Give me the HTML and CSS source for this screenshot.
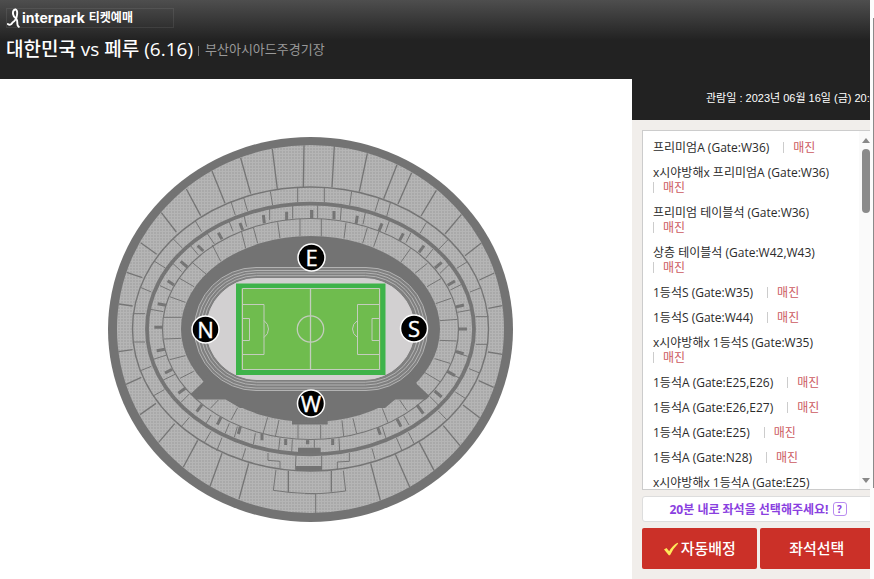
FILE: index.html
```
<!DOCTYPE html>
<html lang="ko">
<head>
<meta charset="utf-8">
<meta name="viewport" content="width=device-width, initial-scale=1">
<title>interpark 티켓예매</title>
<link rel="stylesheet" href="styles.css">
</head>
<body>
<div class="window">
  <div class="page">
    <header class="top">
      <a class="logo" href="#">
        <svg class="logo-mark" viewBox="0 0 14 20" aria-hidden="true"><path d="M.8 16Q3.500 18 5.500 14.500M5.500 14.500Q9.500 12 10 7M10 7Q10.800 2 8.300 1.300Q5.500 2 6 6Q6.500 9 9.300 10.800Q10.500 12.500 10.300 15.500Q10.300 18 11.800 18.800" fill="none" stroke="#fff" stroke-width="1.900" stroke-linecap="round"/></svg>
        <span class="brand">interpark</span>
        <span class="service">티켓예매</span>
      </a>
      <div class="event">
        <h1>대한민국 vs 페루 (6.16)</h1>
        <span class="bar"></span>
        <span class="venue">부산아시아드주경기장</span>
      </div>
    </header>
    <div class="content">
      <main class="map">
        <svg class="stadium" viewBox="100 130 420 400" role="img" aria-label="좌석 배치도">
          <defs>
            <pattern id="seats" width="3" height="3" patternUnits="userSpaceOnUse"><rect width="3" height="3" fill="#a9a9a9"/><path d="M0 .5H3M.5 0V3" stroke="#b5b5b5" stroke-width="1"/></pattern>
          </defs>
          <ellipse cx="310.500" cy="329.500" rx="202.500" ry="192.500" fill="#737373"/>
          <ellipse cx="310.500" cy="329" rx="193.500" ry="184" fill="url(#seats)"/>
          <ellipse cx="310.500" cy="329" rx="178" ry="142" fill="none" stroke="#757575" stroke-width="1.400"/>
          <ellipse cx="310.500" cy="329" rx="163.500" ry="125.300" fill="none" stroke="#757575" stroke-width="3.800"/>
          <ellipse cx="310.500" cy="329" rx="148" ry="110.500" fill="none" stroke="#757575" stroke-width="1.200"/>
          <ellipse cx="310.500" cy="329" rx="129.500" ry="93" fill="#737373"/>
          <path d="M203 382.300L190.500 394L196.500 399.500H226L240 408H385L395 399.500H426L429.500 396L417 384.300L410 370H210Z" fill="#737373"/>
          <path d="M292 415H327.700V424.500H292ZM298 447.700H320.700V453H298ZM296 466H322V471H296Z" fill="#737373"/>
          <g fill="none" stroke="#757575">
            <g transform="translate(100 130) scale(.33333)">
              <path stroke-width="4" d="M612 46L610 171M517 57L532 177M422 84L452 191M336 123L375 220M259 177L302 257M184 248L229 306M122 338L170 373M80 427L127 443M57 522L98 528"/>
              <path stroke-width="3" d="M593 173V217M511 184L518 226M431 203L443 244M393 215L406 256M286 273L305 305M219 326L247 354M162 393L196 414M121 472L154 486M98 551H135M578 227V266M509 235V270M432 257L440 290M387 273L399 304M320 308L343 342M270 345L295 375M215 397L245 425M180 467L212 482M152 538L190 545M600 266V318M533 277L540 325M460 292L473 340M424 303L437 355M337 345L362 394M275 396L318 432M237 444L282 470M209 500L256 517M192 562H245"/>
              <path stroke-width="9" d="M635 240V266M560 245V270M490 255L493 280M420 279L428 300M355 308L366 328M293 347L310 363M242 394L262 411M203 452L222 465M173 521L198 526M163 592H188"/>
            </g>
            <g transform="translate(305 130) scale(.33333)">
              <path stroke-width="4" d="M88 48L81 172M187 70L163 185M276 104L236 206M320 128L279 222M394 181L348 258M469 254L420 312M529 339L480 377M568 429L523 450M592 527L550 535"/>
              <path stroke-width="3" d="M58 173V217M140 184L134 226M222 206L210 245M256 219L245 260M364 278L345 310M430 328L402 357M486 396L455 415M528 473L495 486M550 560H512M38 226V266M109 232L106 270M181 248L174 283M254 270L241 307M318 308L303 338M385 356L362 385M434 402L405 430M472 462L436 480M495 540L457 547M49 266V319M123 278L117 325M187 293L173 340M222 304L206 350M317 355L288 396M367 400L330 430M408 446L366 470M438 505L392 521M458 568L405 572"/>
              <path stroke-width="9" d="M20 240V265M87 243V268M157 257L153 282M231 280L222 303M295 310L284 331M357 347L342 367M410 397L390 414M450 453L428 466M477 525L452 531M462 597H486"/>
            </g>
            <g transform="translate(100 325) scale(.33333)">
              <path stroke-width="4" d="M55 80L98 74M78 178L124 157M120 269L168 235M176 352L224 296M250 426L293 346M330 484L366 385M417 522L446 415M565 437V502"/>
              <path stroke-width="3" d="M100 51H135M119 138L154 124M161 212L193 194M245 304L268 277M313 353L333 319M350 378L366 338M427 402L437 370M504 384V406L540 409V430M588 392L586 435M528 434L520 496L567 502Q620 506 647 506M160 103L200 90M190 165L225 148M243 232L268 207M318 296L333 270M375 326L388 295M403 337L412 305M460 358L466 325M536 375L540 338M575 383L577 343M192 42L243 40M209 104L256 92M240 160L281 139M331 250L355 225M393 285L413 248M489 326L503 277M526 335L537 285M594 298V341"/>
              <path stroke-width="9" d="M170 77L195 73M195 144L216 133M235 205L256 190M290 260L306 239M352 299L363 277M415 327L421 305M486 346V325M557 342V360M623 346V357"/>
            </g>
            <g transform="translate(305 325) scale(.33333)">
              <path stroke-width="4" d="M592 88L549 81M566 187L521 167M524 278L474 240M465 362L415 302M387 436L343 352M314 486L271 388M226 526L197 415M79 437V500"/>
              <path stroke-width="3" d="M115 437L122 498Q60 506 32 506H0M32 506V565M548 58H513M524 144L492 131M481 220L451 201M425 284L400 258M327 355L310 322M291 377L274 338M210 403L201 370M133 384V409L97 411V433M50 393V435M488 94L450 82M465 160L430 143M374 214L400 240M296 272L312 300M232 305L243 340M102 340L104 378M28 344V368M404 46L455 48M389 101L435 115M360 143L405 170M284 225L306 257M232 250L249 293M144 280L155 326M111 286L116 333M47 300V341"/>
              <path stroke-width="9" d="M453 79L476 86M427 139L450 152M389 198L410 216M336 240L355 266M276 282L288 305M218 307L226 329M83 342V360M8 346V358"/>
            </g>
          </g>
          <g fill="#808080" stroke="#b3b3b3">
            <rect x="194.500" y="267.500" width="233" height="123" rx="61.500"/>
            <rect x="197.500" y="270.500" width="227" height="117.500" rx="58.500"/>
            <rect x="200.500" y="273" width="221" height="112" rx="56"/>
            <rect x="203.500" y="275.700" width="215" height="106.500" rx="53"/>
            <rect x="206.500" y="278.500" width="208" height="101" rx="50.500" fill="#d2d0d1" stroke="#d2d0d1"/>
          </g>
          <rect x="238.500" y="286" width="144.500" height="86.500" fill="#6fbc4e" stroke="#3eb34a" stroke-width="5"/>
          <g fill="none" stroke="#c3cdbd">
            <path d="M242.500 288.500H379.500V369.500H242.500ZM242.500 304.500H264V354.500H242.500M242.500 318.500H249.500V340.500H242.500M379.500 304.500H357.500V354.500H379.500M379.500 318.500H372V340.500H379.500M264 320.500Q268.500 324 268.500 329T264 337.500M357.500 320.500Q352.500 324 352.500 329T357.500 337.500"/>
            <path d="M310.500 288.500V369.500" stroke-width="1.300"/>
            <circle cx="310.500" cy="329" r="13.200" stroke-width="1.300"/>
          </g>
          <g class="markers">
            <circle cx="311.500" cy="257.500" r="13.500"/><text x="311.500" y="265.500">E</text>
            <circle cx="205.500" cy="329.500" r="13.500"/><text x="205.500" y="337.500">N</text>
            <circle cx="414" cy="328.500" r="13.500"/><text x="414" y="336.500">S</text>
            <circle cx="311" cy="403.500" r="13.500"/><text x="311" y="411.500">W</text>
          </g>
        </svg>
      </main>
      <aside class="side">
        <p class="date">관람일 : 2023년 06월 16일 (금) 20:00</p>
        <div class="side-body">
          <div class="list-box">
            <ul class="grades">
              <li><span>프리미엄A (Gate:W36)</span><em>매진</em></li>
              <li><span>x시야방해x 프리미엄A (Gate:W36)</span><em>매진</em></li>
              <li><span>프리미엄 테이블석 (Gate:W36)</span><em>매진</em></li>
              <li><span>상층 테이블석 (Gate:W42,W43)</span><em>매진</em></li>
              <li><span>1등석S (Gate:W35)</span><em>매진</em></li>
              <li><span>1등석S (Gate:W44)</span><em>매진</em></li>
              <li><span>x시야방해x 1등석S (Gate:W35)</span><em>매진</em></li>
              <li><span>1등석A (Gate:E25,E26)</span><em>매진</em></li>
              <li><span>1등석A (Gate:E26,E27)</span><em>매진</em></li>
              <li><span>1등석A (Gate:E25)</span><em>매진</em></li>
              <li><span>1등석A (Gate:N28)</span><em>매진</em></li>
              <li><span>x시야방해x 1등석A (Gate:E25)</span></li>
            </ul>
            <div class="scroll" aria-hidden="true">
              <i class="up"></i><i class="thumb"></i><i class="down"></i>
            </div>
          </div>
          <div class="notice">
            <span>20분 내로 좌석을 선택해주세요!</span>
            <button class="help" type="button">?</button>
          </div>
          <div class="actions">
            <button class="action" type="button"><svg class="check" viewBox="0 0 16 14" aria-hidden="true"><path d="M1 7.500L3.500 6L6.200 9.300Q9.500 3.500 14.500 .8L15.200 1.500Q10.500 6 7 13.200H5.800Z" fill="#ffe95a"/></svg>자동배정</button>
            <button class="action" type="button">좌석선택</button>
          </div>
        </div>
      </aside>
    </div>
  </div>
  <div class="page-scroll" aria-hidden="true"><i></i></div>
</div>
</body>
</html>
```
FILE: styles.css
```
* { box-sizing: border-box; }
body {
  margin: 0;
  background: #fff;
  color: #2b2b2b;
  font: 12px/15px "Open Sans", "Noto Sans CJK KR", sans-serif;
}
h1, p, ul { margin: 0; padding: 0; }
button { margin: 0; padding: 0; font: inherit; cursor: pointer; }

.window { display: flex; min-height: 100vh; }
.page { flex: 1; min-width: 0; display: flex; flex-direction: column; overflow: hidden; }

.top {
  height: 79px;
  padding: 8px 6px 0;
  background: linear-gradient(#4e4e4e, #222 40px);
  color: #fff;
}
.logo {
  display: flex;
  align-items: center;
  width: 168px;
  height: 20px;
  border: 1px solid rgba(255, 255, 255, .08);
  color: #fff;
  text-decoration: none;
  font-weight: 700;
  line-height: 18px;
}
.logo-mark { width: 14px; height: 20px; margin-right: 1px; flex: none; }
.brand { font-family: Inter, sans-serif; font-weight: 700; font-size: 14px; }
.service { margin-left: 4px; font-size: 12px; }
.event { display: flex; align-items: center; height: 42px; white-space: nowrap; }
h1 { font-size: 19px; line-height: 24px; font-weight: 500; }
.bar { width: 1px; height: 10px; margin: 4px 6px 0 5px; background: #777; }
.venue { font-size: 13px; color: #999; }

.content { flex: 1; display: flex; }
.map { flex: 1; min-width: 0; padding: 51px 0 0 100px; }
.stadium { display: block; width: 100%; max-width: 420px; height: auto; }
.markers circle { fill: #000; stroke: #fff; stroke-width: 1.5; }
.markers text { fill: #fff; font: 22px "Open Sans", sans-serif; text-anchor: middle; stroke: #fff; stroke-width: .4; }

.side { flex: none; width: 238px; overflow: hidden; background: #f1eeeb; }
.date {
  height: 41px;
  padding: 12px 0 0 74px;
  background: #222;
  color: #fff;
  white-space: nowrap;
  font-size: 11px;
  font-family: "Liberation Sans", "Noto Sans CJK KR", sans-serif;
}
.side-body { margin-right: -4px; padding: 10px 0 10px 10px; }
.list-box {
  display: flex;
  height: 360px;
  border: 1px solid #ccc;
  background: #fff;
  overflow: hidden;
}
.grades { flex: 1; padding: 9px 0 0 10px; list-style: none; }
.grades li { display: flex; flex-wrap: wrap; column-gap: 14px; margin-bottom: 10px; white-space: nowrap; }
.grades em {
  display: flex;
  align-items: center;
  color: #cc5a5f;
  font-style: normal;
}
.grades em::before { content: ""; width: 1px; height: 11px; margin-right: 9px; background: #ccc; }
.scroll {
  display: flex;
  flex-direction: column;
  align-items: center;
  width: 14px;
  margin-left: 4px;
  padding: 7px 0 6px;
  background: #fafafa;
}
.up, .down { border: 4px solid transparent; }
.up { border-top: 0; border-bottom: 5px solid #888; }
.down { margin-top: auto; border-bottom: 0; border-top: 5px solid #888; }
.thumb { width: 8px; height: 64px; margin-top: 6px; border-radius: 4px; background: #8b8b8b; }

.notice {
  display: flex;
  align-items: center;
  justify-content: center;
  gap: 4px;
  height: 26px;
  margin-top: 6px;
  border: 1px solid #ddd;
  border-radius: 3px;
  background: #fff;
  color: #8a3fe0;
  font-weight: 700;
}
.help {
  width: 14px;
  height: 14px;
  border: 1px solid #b98cf0;
  border-radius: 3px;
  background: #fff;
  color: #8a3fe0;
  font-size: 10px;
  line-height: 12px;
}
.actions { display: grid; grid-template-columns: 1fr 1fr; gap: 3px; margin-top: 6px; }
.action {
  display: flex;
  align-items: center;
  justify-content: center;
  gap: 2px;
  height: 41px;
  border: 0;
  border-radius: 2px;
  background: #cb3028;
  color: #fff;
  font-size: 15px;
  font-weight: 500;
}
.check { width: 16px; height: 14px; }

.page-scroll { flex: none; width: 4px; padding-top: 18px; background: #fcfcfc; }
.page-scroll i { display: block; width: 1px; height: 470px; margin-left: auto; background: #8b8b8b; }
```
